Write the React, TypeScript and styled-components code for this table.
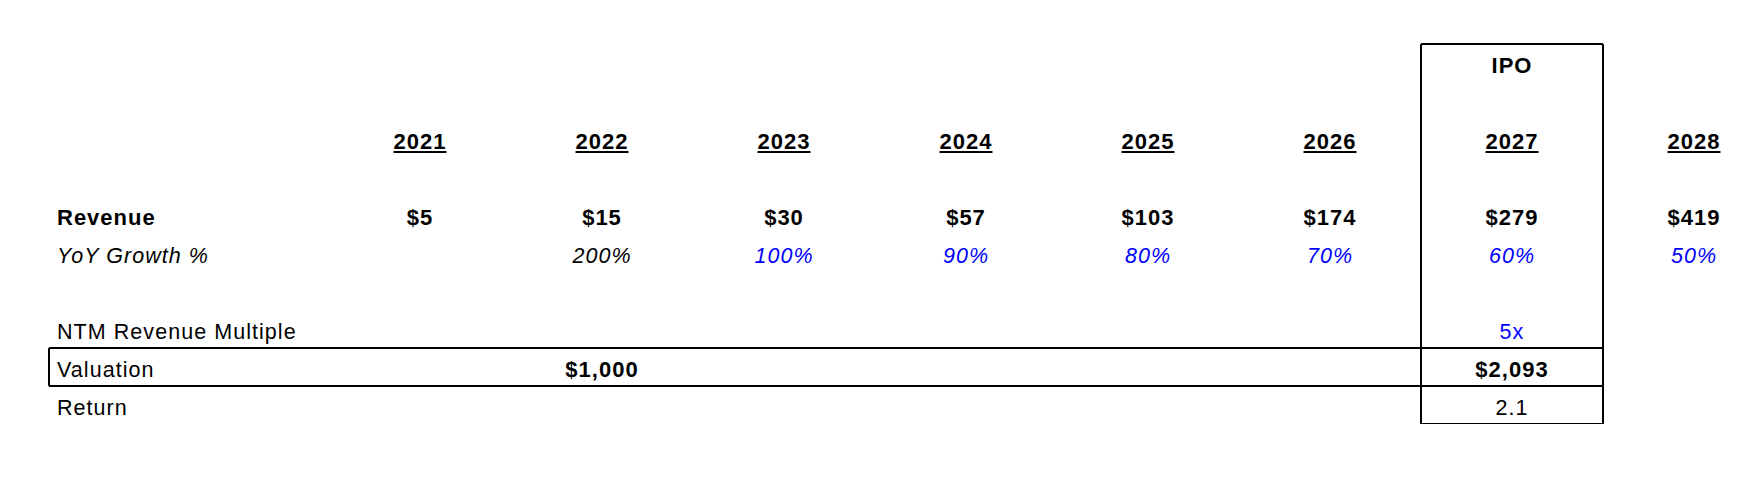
import styled, { createGlobalStyle, css } from 'styled-components';

const GlobalStyle = createGlobalStyle`
    html, body {
        margin: 0;
        padding: 0;
        background: #ffffff;
        overflow: hidden;
    }
    body {
        font-family: "Liberation Sans", Arial, sans-serif;
        color: #000000;
    }
`;

type Tone = 'black' | 'blue';

interface CellData {
    text: string;
    bold?: boolean;
    italic?: boolean;
    underline?: boolean;
    tone?: Tone;
}

interface RowData {
    label?: CellData;
    cells: (CellData | null)[];
    boxed?: boolean;
}

interface EdgeProps {
    $top?: boolean;
    $bottom?: boolean;
    $left?: boolean;
    $right?: boolean;
}

// 2px rule centred on the cell edge: 1px inside, 1px outside
const edges = ({ $top, $bottom, $left, $right }: EdgeProps) => {
    const parts: string[] = [];
    if ($top) parts.push('inset 0 1px 0 #000', '0 -1px 0 #000');
    if ($bottom) parts.push('inset 0 -1px 0 #000', '0 1px 0 #000');
    if ($left) parts.push('inset 1px 0 0 #000', '-1px 0 0 #000');
    if ($right) parts.push('inset -1px 0 0 #000', '1px 0 0 #000');
    return parts.length ? `box-shadow: ${parts.join(', ')};` : '';
};

const Sheet = styled.div`
    width: 1750px;
    overflow: hidden;
    padding: 44px 0 0 49px;
    box-sizing: border-box;
`;

const Row = styled.div`
    display: grid;
    grid-template-columns: 280px repeat(8, 182px);
    height: 38px;
`;

const textStyle = css<{ $bold?: boolean; $italic?: boolean; $underline?: boolean; $tone?: Tone }>`
    font-size: ${(p) => (p.$bold ? '22px' : '21.5px')};
    font-weight: ${(p) => (p.$bold ? 700 : 400)};
    font-style: ${(p) => (p.$italic ? 'italic' : 'normal')};
    letter-spacing: ${(p) => (p.$bold ? '1px' : '1.05px')};
    color: ${(p) => (p.$tone === 'blue' ? '#0000ff' : '#000000')};
    ${(p) =>
        p.$underline &&
        css`
            text-decoration: underline;
            text-decoration-thickness: 2px;
            text-underline-offset: 2px;
        `}
`;

type CellProps = EdgeProps & { $bold?: boolean; $italic?: boolean; $underline?: boolean; $tone?: Tone };

const LabelCell = styled.div<CellProps>`
    height: 38px;
    box-sizing: border-box;
    padding: 6px 0 0 8px;
    line-height: 32px;
    white-space: nowrap;
    ${textStyle}
    ${edges}
`;

const ValueCell = styled.div<CellProps>`
    height: 38px;
    box-sizing: border-box;
    padding-top: 6px;
    line-height: 32px;
    text-align: center;
    white-space: nowrap;
    ${textStyle}
    ${edges}
`;

const IPO_COL = 6;

const years = ['2021', '2022', '2023', '2024', '2025', '2026', '2027', '2028'];
const revenue = ['$5', '$15', '$30', '$57', '$103', '$174', '$279', '$419'];
const growth = ['', '200%', '100%', '90%', '80%', '70%', '60%', '50%'];

const empty = (): (CellData | null)[] => years.map(() => null);

const rows: RowData[] = [
    { cells: empty().map((c, i) => (i === IPO_COL ? { text: 'IPO', bold: true } : c)) },
    { cells: empty() },
    { cells: years.map((y) => ({ text: y, bold: true, underline: true })) },
    { cells: empty() },
    {
        label: { text: 'Revenue', bold: true },
        cells: revenue.map((v) => ({ text: v, bold: true })),
    },
    {
        label: { text: 'YoY Growth %', italic: true },
        cells: growth.map((g, i) =>
            g ? { text: g, italic: true, tone: i === 1 ? 'black' : 'blue' } : null
        ),
    },
    { cells: empty() },
    {
        label: { text: 'NTM Revenue Multiple' },
        cells: empty().map((c, i) => (i === IPO_COL ? { text: '5x', tone: 'blue' } : c)),
    },
    {
        label: { text: 'Valuation' },
        boxed: true,
        cells: empty().map((c, i) =>
            i === 1 ? { text: '$1,000', bold: true } : i === IPO_COL ? { text: '$2,093', bold: true } : c
        ),
    },
    {
        label: { text: 'Return' },
        cells: empty().map((c, i) => (i === IPO_COL ? { text: '2.1' } : c)),
    },
];

export default function App() {
    const last = rows.length - 1;
    return (
        <>
            <GlobalStyle />
            <Sheet>
                {rows.map((row, r) => (
                    <Row key={r}>
                        <LabelCell
                            $bold={row.label?.bold}
                            $italic={row.label?.italic}
                            $top={row.boxed}
                            $bottom={row.boxed}
                            $left={row.boxed}
                        >
                            {row.label?.text}
                        </LabelCell>
                        {row.cells.map((cell, i) => {
                            const ipo = i === IPO_COL;
                            const inBox = row.boxed && i <= IPO_COL;
                            return (
                                <ValueCell
                                    key={i}
                                    $bold={cell?.bold}
                                    $italic={cell?.italic}
                                    $underline={cell?.underline}
                                    $tone={cell?.tone}
                                    $left={ipo}
                                    $right={ipo}
                                    $top={(ipo && r === 0) || inBox}
                                    $bottom={(ipo && r === last) || inBox}
                                >
                                    {cell?.text}
                                </ValueCell>
                            );
                        })}
                    </Row>
                ))}
            </Sheet>
        </>
    );
}
